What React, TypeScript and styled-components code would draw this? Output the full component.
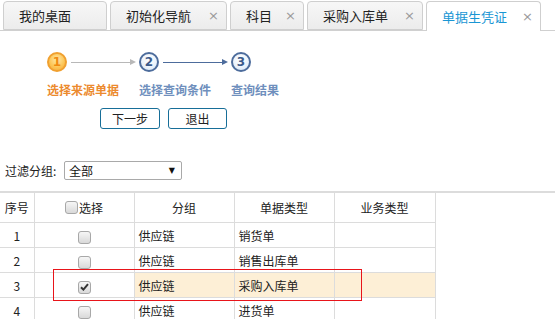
import React from "react";
import styled, { createGlobalStyle } from "styled-components";

const Global = createGlobalStyle`
  html, body { margin: 0; padding: 0; background: #fff; overflow: hidden; }
  body { font-family: "Noto Sans CJK SC", "Noto Sans", "Liberation Sans", sans-serif; font-size: 12px; color: #333; }
`;

const Page = styled.div`
  width: 555px;
  height: 319px;
  overflow: hidden;
  position: relative;
`;

const TabBar = styled.div`
  display: flex;
  align-items: flex-end;
  gap: 3px;
  height: 30px;
  padding-left: 3px;
  border-bottom: 1px solid #d0d0d0;
  box-sizing: content-box;
`;

const Tab = styled.div<{ $w: number; $active?: boolean }>`
  box-sizing: border-box;
  width: ${(p) => p.$w}px;
  margin-bottom: ${(p) => (p.$active ? "-1px" : "0")};
  height: ${(p) => (p.$active ? "30px" : "29px")};
  border: 1px solid #cfcfcf;
  border-bottom: ${(p) => (p.$active ? "none" : "1px solid #cfcfcf")};
  border-radius: 4px 4px 0 0;
  background: ${(p) => (p.$active ? "#fff" : "linear-gradient(#f7f7f7, #ececec)")};
  color: ${(p) => (p.$active ? "#1a96d4" : "#222")};
  font-size: 13px;
  display: flex;
  align-items: center;
  padding-left: 15px;
  padding-right: 7px;
`;

const TabLabel = styled.span`
  flex: 1;
  white-space: nowrap;
  line-height: 1;
`;

const Close = styled.span`
  color: #9a9a9a;
  font-family: "DejaVu Sans", sans-serif;
  font-size: 13px;
  line-height: 1;
`;

const StepsArea = styled.div`
  padding: 21px 0 0 47px;
`;

const StepRow = styled.div`
  display: grid;
  grid-template-columns: 92px 92px 92px;
`;

const Step = styled.div`
  display: flex;
  flex-direction: column;
  align-items: flex-start;
`;

const StepHead = styled.div`
  display: flex;
  align-items: center;
  height: 20px;
  width: 100%;
`;

const Circle = styled.div<{ $active?: boolean }>`
  box-sizing: border-box;
  width: 20px;
  height: 20px;
  border-radius: 50%;
  flex: none;
  border: 2px solid ${(p) => (p.$active ? "#f0a030" : "#4d6c9c")};
  background: ${(p) =>
    p.$active
      ? "radial-gradient(circle at 50% 35%, #ffe9a8 0%, #fcc453 60%, #f6a93a 100%)"
      : "radial-gradient(circle at 50% 35%, #ffffff 0%, #eaf2fb 60%, #cfe0f3 100%)"};
  color: ${(p) => (p.$active ? "#f08a10" : "#3c5a8a")};
  font-family: "DejaVu Sans", sans-serif;
  font-weight: bold;
  font-size: 12px;
  line-height: 16px;
  text-align: center;
`;

const Connector = styled.div<{ $color: string }>`
  position: relative;
  margin-left: 4px;
  width: 62px;
  height: 1px;
  background: ${(p) => p.$color};
  &::after {
    content: "";
    position: absolute;
    right: -3px;
    top: -3px;
    border-left: 6px solid ${(p) => p.$color};
    border-top: 3.5px solid transparent;
    border-bottom: 3.5px solid transparent;
  }
`;

const StepLabel = styled.div<{ $active?: boolean }>`
  margin-top: 9px;
  font-size: 12px;
  font-weight: bold;
  white-space: nowrap;
  color: ${(p) => (p.$active ? "#ec8a2e" : "#6f8fbd")};
`;

const Buttons = styled.div`
  display: flex;
  gap: 8px;
  padding: 10px 0 0 100px;
`;

const Btn = styled.button<{ $w: number }>`
  box-sizing: border-box;
  width: ${(p) => p.$w}px;
  height: 21px;
  border: 1px solid #176e98;
  border-radius: 3px;
  background: #fff;
  color: #222;
  font-family: inherit;
  font-size: 12px;
  padding: 0;
  line-height: 19px;
`;

const FilterRow = styled.div`
  display: flex;
  align-items: center;
  padding: 32px 0 0 5px;
  height: 19px;
`;

const FilterLabel = styled.span`
  font-size: 12px;
  color: #222;
  width: 59px;
`;

const Select = styled.div`
  box-sizing: border-box;
  width: 118px;
  height: 19px;
  border: 1px solid #a9a9a9;
  border-radius: 2px;
  display: flex;
  align-items: center;
  justify-content: space-between;
  padding: 0 6px 0 4px;
  font-size: 12px;
  color: #111;
`;

const Caret = styled.span`
  font-size: 8px;
  color: #111;
  font-family: "DejaVu Sans", sans-serif;
`;

const TableWrap = styled.div`
  position: relative;
  margin-top: 11px;
  border-top: 2px solid #dcdcdc;
`;

const Table = styled.table`
  border-collapse: collapse;
  table-layout: fixed;
  width: 435px;
  font-size: 12px;
`;

const Col = styled.col<{ $w: number }>`
  width: ${(p) => p.$w}px;
`;

const Th = styled.th`
  height: 29px;
  padding: 0;
  font-weight: normal;
  color: #222;
  text-align: center;
  border-left: 1px solid #dcdcdc;
  border-right: 1px solid #dcdcdc;
  border-bottom: 1px solid #dcdcdc;
  &:first-child { border-left: none; }
`;

const Td = styled.td<{ $align?: string; $hl?: boolean }>`
  height: 24px;
  padding: 0 0 0 4px;
  text-align: ${(p) => p.$align || "left"};
  color: #222;
  background: ${(p) => (p.$hl ? "#fdefd6" : "transparent")};
  border: 1px solid #dcdcdc;
  border-top: none;
  &:first-child { border-left: none; padding: 0; }
`;

const CheckCell = styled(Td)`
  padding: 0;
  text-align: center;
`;

const HeadCheck = styled.span`
  display: inline-flex;
  align-items: center;
  gap: 1px;
`;

const Box = styled.span`
  box-sizing: border-box;
  display: inline-flex;
  align-items: center;
  justify-content: center;
  width: 13px;
  height: 13px;
  border: 1px solid #a8a8a8;
  border-radius: 3px;
  background: linear-gradient(#f6f6f6, #d9d9d9);
  vertical-align: middle;
`;

const Highlight = styled.div`
  position: absolute;
  left: 53px;
  top: 76px;
  width: 309px;
  height: 32px;
  box-sizing: border-box;
  border: 1px solid #e8141a;
  pointer-events: none;
`;

const tabs = [
  { label: "我的桌面", w: 104, close: false },
  { label: "初始化导航", w: 117, close: true },
  { label: "科目", w: 74, close: true },
  { label: "采购入库单", w: 116, close: true },
  { label: "单据生凭证", w: 115, close: true, active: true },
];

const rows = [
  { n: "1", g: "供应链", t: "销货单" },
  { n: "2", g: "供应链", t: "销售出库单" },
  { n: "3", g: "供应链", t: "采购入库单", checked: true },
  { n: "4", g: "供应链", t: "进货单" },
];

const Check = () => (
  <svg width="9" height="8" viewBox="0 0 9 8">
    <path d="M1 4.2 L3.4 6.6 L8 1.2" stroke="#333" strokeWidth="2" fill="none" />
  </svg>
);

export default function App() {
  return (
    <Page>
      <Global />
      <TabBar>
        {tabs.map((t) => (
          <Tab key={t.label} $w={t.w} $active={t.active}>
            <TabLabel>{t.label}</TabLabel>
            {t.close && <Close>×</Close>}
          </Tab>
        ))}
      </TabBar>
      <StepsArea>
        <StepRow>
          <Step>
            <StepHead>
              <Circle $active>1</Circle>
              <Connector $color="#b8b8b8" />
            </StepHead>
            <StepLabel $active>选择来源单据</StepLabel>
          </Step>
          <Step>
            <StepHead>
              <Circle>2</Circle>
              <Connector $color="#4d6c9c" />
            </StepHead>
            <StepLabel>选择查询条件</StepLabel>
          </Step>
          <Step>
            <StepHead>
              <Circle>3</Circle>
            </StepHead>
            <StepLabel>查询结果</StepLabel>
          </Step>
        </StepRow>
      </StepsArea>
      <Buttons>
        <Btn $w={60}>下一步</Btn>
        <Btn $w={59}>退出</Btn>
      </Buttons>
      <FilterRow>
        <FilterLabel>过滤分组:</FilterLabel>
        <Select>
          <span>全部</span>
          <Caret>▼</Caret>
        </Select>
      </FilterRow>
      <TableWrap>
        <Table>
          <colgroup>
            <Col $w={34} />
            <Col $w={100} />
            <Col $w={100} />
            <Col $w={100} />
            <Col $w={101} />
          </colgroup>
          <thead>
            <tr>
              <Th>序号</Th>
              <Th>
                <HeadCheck>
                  <Box />
                  选择
                </HeadCheck>
              </Th>
              <Th>分组</Th>
              <Th>单据类型</Th>
              <Th>业务类型</Th>
            </tr>
          </thead>
          <tbody>
            {rows.map((r) => (
              <tr key={r.n}>
                <Td $align="center">{r.n}</Td>
                <CheckCell>
                  <Box>{r.checked && <Check />}</Box>
                </CheckCell>
                <Td $hl={r.checked}>{r.g}</Td>
                <Td $hl={r.checked}>{r.t}</Td>
                <Td $hl={r.checked}></Td>
              </tr>
            ))}
          </tbody>
        </Table>
        <Highlight />
      </TableWrap>
    </Page>
  );
}
